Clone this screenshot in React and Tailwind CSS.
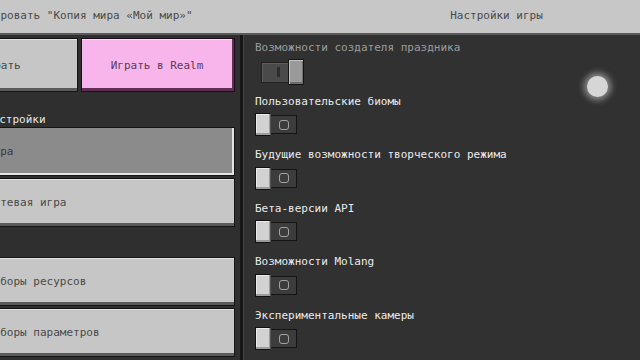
import React from 'react';

const font = { fontFamily: '"DejaVu Sans Mono", "Liberation Mono", monospace' };

const rows = [
  { label: 'Возможности создателя праздника', disabled: true },
  { label: 'Пользовательские биомы' },
  { label: 'Будущие возможности творческого режима' },
  { label: 'Бета-версии API' },
  { label: 'Возможности Molang' },
  { label: 'Экспериментальные камеры' },
];

const OffToggle = () => (
  <div className="flex items-center h-[24px]">
    <div className="w-[16px] h-[23px] bg-[#d2d2d2] border border-[#111] border-r-[#555] shadow-[inset_-1px_-2px_0_#9c9c9c,inset_1px_1px_0_#ececec]" />
    <div className="w-[26px] h-[19px] bg-[#3c3c3c] border border-[#141414] border-l-0 flex items-center justify-center">
      <div className="w-[10px] h-[10px] rounded-[3px] border-[1.5px] border-[#a4a4a4]" />
    </div>
  </div>
);

const DisabledOnToggle = () => (
  <div className="flex items-center h-[26px] ml-[6px]">
    <div className="w-[28px] h-[21px] bg-[#4a4a4a] border border-[#222] flex items-center justify-center shadow-[inset_1px_1px_0_#5c5c5c]">
      <div className="w-[3px] h-[10px] bg-[#2e2e2e] ml-[6px]" />
    </div>
    <div className="w-[16px] h-[26px] -ml-[1px] bg-[#9a9a9a] border border-[#151515] shadow-[inset_1px_1px_0_#c2c2c2,inset_-1px_-2px_0_#6e6e6e]" />
  </div>
);

const GrayButton = ({ children, className = '' }) => (
  <div className={`border border-[#151515] bg-[#c6c6c6] flex items-center ${className}`}>
    <div className="w-full h-full flex items-center border-b-[3px] border-[#5a5a5a] shadow-[inset_0_1px_0_#e0e0e0] pt-[5px]">
      {children}
    </div>
  </div>
);

export default function App() {
  return (
    <div className="w-[640px] h-[360px] overflow-hidden bg-[#313131] flex flex-col text-[11px]" style={font}>
      {/* Top bar */}
      <div className="h-[35px] shrink-0 bg-[#c7c7c7] border-b-2 border-[#5a5a5a] flex items-center">
        <div className="w-[241px] shrink-0 -ml-[26px] text-[#4a4a4a] whitespace-nowrap">
          Копировать "Копия мира «Мой мир»"
        </div>
        <div className="flex-1 text-center text-[#4a4a4a] pl-[138px]">Настройки игры</div>
      </div>

      <div className="flex flex-1 min-h-0">
        {/* Left panel */}
        <div className="w-[240px] shrink-0 overflow-hidden bg-[#2f2f30] pt-[3px] pr-[5px]">
          <div className="-ml-[14px] flex flex-col">
            <div className="flex gap-[2px] h-[54px]">
              <GrayButton className="w-[92px] h-full">
                <div className="-ml-[6px] text-[#4a4a4a] whitespace-nowrap">Играть</div>
              </GrayButton>
              <div className="flex-1 border border-[#1c0f1a] bg-[#f8b5ec] ml-[1px]">
                <div className="w-full h-full flex items-center justify-center pt-[5px] border-b-[3px] border-r-[2px] border-[#5e2e57] shadow-[inset_0_1px_0_#ffd6f6] text-[#5e3a5b]">
                  Играть в Realm
                </div>
              </div>
            </div>

            <div className="mt-[21px] h-[14px] leading-[14px] text-[#e6e6e6]">Настройки</div>

            <div className="h-[49px] border border-[#151515] bg-[#8b8b8b]">
              <div className="w-full h-full flex items-center pt-[4px] border-r-2 border-b-2 border-[#e4e4e4] text-[#3a3a3a]">
                Игра
              </div>
            </div>
            <GrayButton className="mt-[2px] h-[49px]">
              <div className="text-[#4a4a4a]">Сетевая игра</div>
            </GrayButton>

            <GrayButton className="mt-[30px] h-[49px]">
              <div className="text-[#4a4a4a]">Наборы ресурсов</div>
            </GrayButton>
            <GrayButton className="mt-[2px] h-[49px]">
              <div className="text-[#4a4a4a]">Наборы параметров</div>
            </GrayButton>
          </div>
        </div>

        {/* Divider */}
        <div className="w-[3px] shrink-0 bg-[#161616]" />
        <div className="w-px shrink-0 bg-[#444]" />

        {/* Right panel */}
        <div className="relative flex-1 bg-[#313132] pl-[11px] pt-[6px]">
          {rows.map((r) => (
            <div key={r.label} className="h-[53.6px]">
              <div className={`h-[14px] leading-[14px] whitespace-nowrap ${r.disabled ? 'text-[#9c9c9c]' : 'text-[#eaeaea]'}`}>
                {r.label}
              </div>
              <div className="mt-[4px]">{r.disabled ? <DisabledOnToggle /> : <OffToggle />}</div>
            </div>
          ))}

          {/* Cursor */}
          <div className="absolute left-[343px] top-[41px] w-[21px] h-[21px] rounded-full bg-[#d6d6d6] shadow-[0_0_6px_3px_rgba(220,220,220,0.55)]" />
        </div>
      </div>
    </div>
  );
}
